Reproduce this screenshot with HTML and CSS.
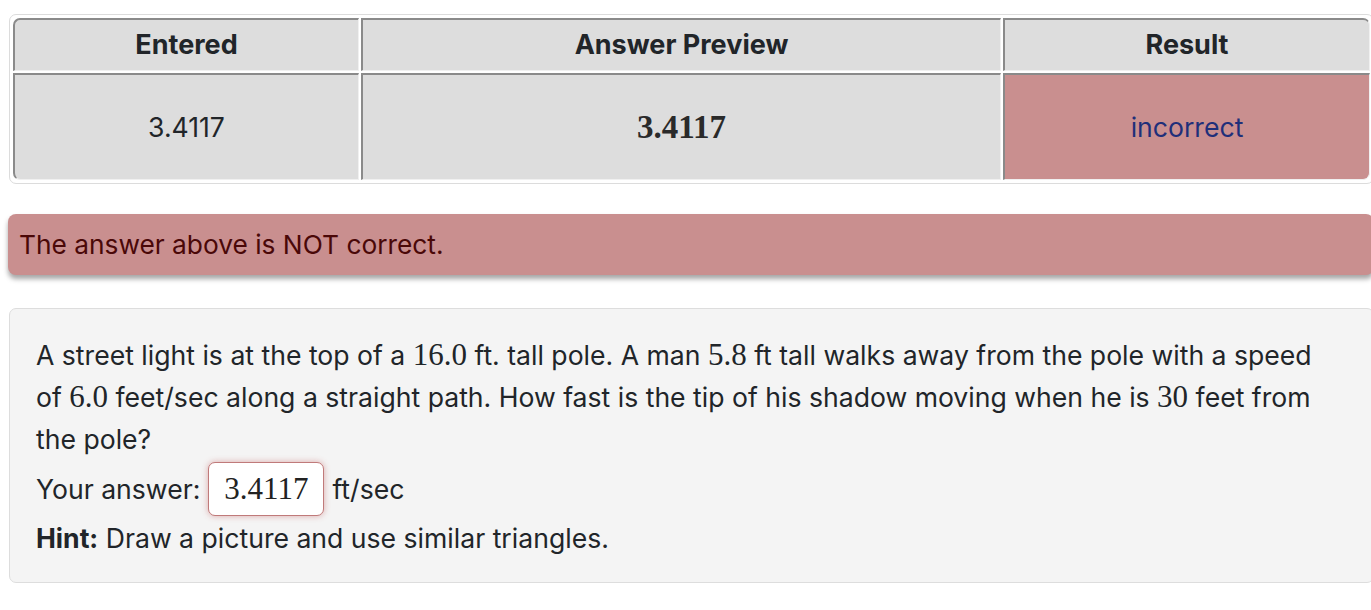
FILE: index.html
```html
<!DOCTYPE html>
<html>
<head>
<meta charset="utf-8">
<link rel="stylesheet" href="styles.css">
</head>
<body>
<div class="page">
  <div class="attempts-wrap">
    <table class="attempts">
      <tr>
        <th class="c1 tl">Entered</th>
        <th class="c2">Answer Preview</th>
        <th class="c3 tr">Result</th>
      </tr>
      <tr>
        <td class="c1 bl body">3.4117</td>
        <td class="c2 body"><span class="math-lg">3.4117</span></td>
        <td class="c3 br body wrong"><span class="result-text">incorrect</span></td>
      </tr>
    </table>
  </div>

  <div class="alert">The answer above is NOT correct.</div>

  <div class="problem">
    <p class="text">A street light is at the top of a <span class="math">16.0</span> ft. tall pole. A man <span class="math">5.8</span> ft tall walks away from the pole with a speed of <span class="math">6.0</span> feet/sec along a straight path. How fast is the tip of his shadow moving when he is <span class="math">30</span> feet from the pole?</p>
    <div class="answer-line">Your answer: <span class="answer-box">3.4117</span> ft/sec</div>
    <div class="hint"><b>Hint:</b> Draw a picture and use similar triangles.</div>
  </div>
</div>
</body>
</html>
```

FILE: styles.css
```css
html, body {
  margin: 0;
  padding: 0;
  background: #ffffff;
  overflow: hidden;
}
body {
  font-family: Inter, "Noto Sans", sans-serif;
  font-size: 26.6px;
  line-height: 42px;
  color: #212529;
}
.page {
  width: 1366px;
  padding: 14px 0 0 8px;
}
.attempts-wrap {
  border: 1px solid #dcdcdc;
  border-radius: 7px;
  margin-left: 1px;
  padding: 1px;
}
.attempts {
  width: 100%;
  border-collapse: separate;
  border-spacing: 2px 2px;
}
.attempts th, .attempts td {
  background: #dddddd;
  border-top: 2px solid #8a8a8a;
  border-left: 2px solid #8a8a8a;
  border-right: 1px solid #f0f0f0;
  border-bottom: 1px solid #f0f0f0;
  text-align: center;
  padding: 0;
}
.attempts th {
  height: 50px;
  font-weight: 700;
  font-size: 27px;
}
.attempts td.body {
  height: 104px;
}
.c1 { width: 343px; }
.c2 { width: 637px; }
.tl { border-top-left-radius: 7px; }
.tr { border-top-right-radius: 7px; }
.bl { border-bottom-left-radius: 7px; }
.br { border-bottom-right-radius: 7px; }
.attempts td.wrong {
  background: #c98f8f;
}
.result-text {
  color: #1f2f7a;
}
.math, .math-lg, .answer-box {
  font-family: "Liberation Serif", "DejaVu Serif", serif;
}
.math {
  font-size: 31px;
  line-height: 1;
}
.math-lg {
  font-size: 33px;
  font-weight: 700;
  color: #2a2a2a;
}
.alert {
  margin-top: 30px;
  background: #c98f8f;
  color: #4a0808;
  border-radius: 8px;
  font-size: 26.3px;
  line-height: 41.6px;
  padding: 10px 11px 9px;
  box-shadow: 0 4px 5px rgba(0, 0, 0, 0.35);
}
.problem {
  margin-top: 33px;
  margin-left: 1px;
  background: #f4f4f4;
  border: 1px solid #dddddd;
  border-radius: 7px;
  padding: 25px 39px 23px 26px;
}
.text {
  margin: 0;
}
.answer-line {
  margin-top: 2px;
  display: flex;
  align-items: center;
  gap: 8px;
}
.answer-box {
  display: inline-block;
  background: #ffffff;
  border: 1px solid #c07a7a;
  border-radius: 7px;
  box-shadow: 0 0 6px rgba(190, 80, 80, 0.45);
  font-size: 31px;
  line-height: 52px;
  padding: 0 15px;
  color: #222;
}
.hint {
  margin-top: 1px;
}
.hint b {
  font-weight: 700;
}
```
